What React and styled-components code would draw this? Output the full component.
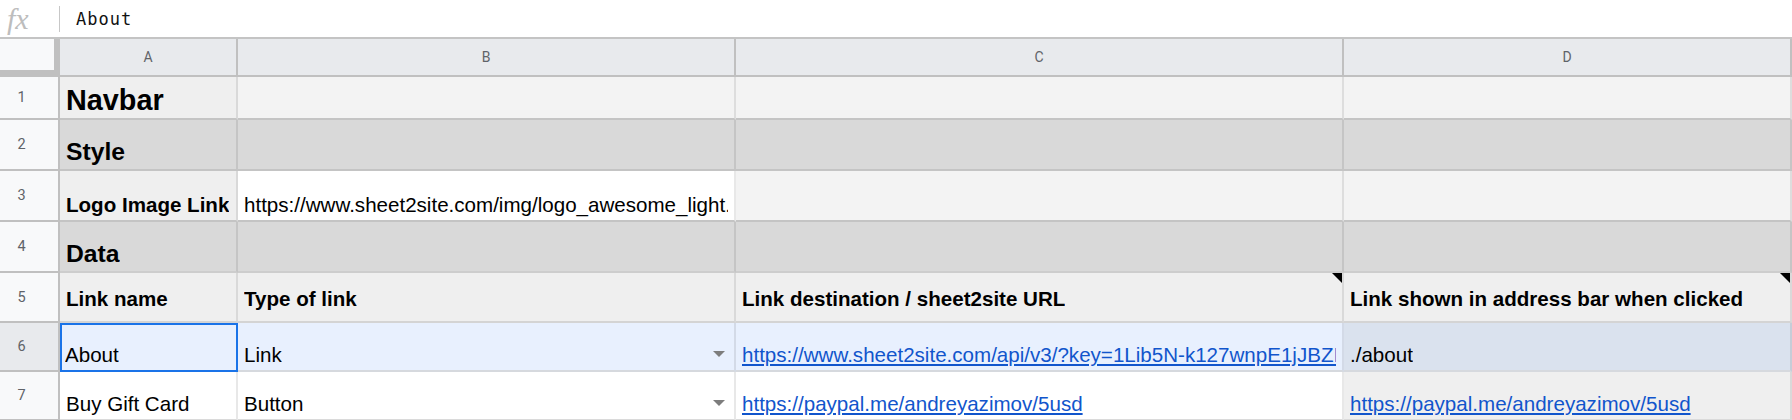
import React from "react";
import styled, { createGlobalStyle } from "styled-components";

const GlobalStyle = createGlobalStyle`
  html, body {
    margin: 0;
    padding: 0;
    background: #fff;
  }
  body {
    font-family: "Liberation Sans", Arial, sans-serif;
    overflow: hidden;
  }
`;

const COLS = "60px 178px 498px 608px 1fr";

const Sheet = styled.div`
  width: 1792px;
  height: 420px;
  overflow: hidden;
  display: flex;
  flex-direction: column;
`;

const FormulaBar = styled.div`
  height: 39px;
  flex-shrink: 0;
  box-sizing: border-box;
  border-bottom: 2px solid #c4c4c4;
  display: flex;
  align-items: center;
`;

const FxLabel = styled.div`
  width: 59px;
  box-sizing: border-box;
  padding-left: 7px;
  font-family: "Liberation Serif", serif;
  font-style: italic;
  font-size: 30px;
  color: #bdbdbd;
  line-height: 1.2;
`;

const Divider = styled.div`
  width: 1px;
  height: 26px;
  background: #c7c7c7;
`;

const FormulaText = styled.div`
  padding-left: 16px;
  font-family: "DejaVu Sans Mono", "Liberation Mono", monospace;
  font-size: 17px;
  letter-spacing: 1px;
  color: #111;
`;

const Row = styled.div`
  display: grid;
  grid-template-columns: ${COLS};
  height: ${(p) => p.h}px;
  flex-shrink: 0;
`;

const Corner = styled.div`
  box-sizing: border-box;
  background: #f8f9fa;
  border-right: 6px solid #c0c0c0;
  border-bottom: 7px solid #c0c0c0;
`;

const ColHead = styled.div`
  box-sizing: border-box;
  background: #e8eaed;
  border-right: 2px solid #c0c0c0;
  border-bottom: 2px solid #c0c0c0;
  display: flex;
  align-items: center;
  justify-content: center;
  font-family: Roboto, "Liberation Sans", sans-serif;
  font-size: 14px;
  color: #5f6368;
`;

const RowHead = styled.div`
  box-sizing: border-box;
  background: ${(p) => (p.active ? "#e8eaed" : "#f8f9fa")};
  border-right: 2px solid #c0c0c0;
  border-bottom: 2px solid #c0c0c0;
  display: flex;
  align-items: center;
  justify-content: center;
  padding-right: 15px;
  font-family: Roboto, "Liberation Sans", sans-serif;
  font-size: 14.5px;
  color: #5f6368;
`;

const Cell = styled.div`
  position: relative;
  box-sizing: border-box;
  min-width: 0;
  overflow: hidden;
  white-space: nowrap;
  background: ${(p) => p.bg || "#fff"};
  border-right: 2px solid rgba(0, 0, 0, 0.09);
  border-bottom: 2px solid ${(p) => p.line || "#c4c4c4"};
  display: flex;
  align-items: ${(p) => (p.middle ? "center" : "flex-end")};
  padding: ${(p) => (p.middle ? "4px 6px 0 6px" : "0 6px 2px 6px")};
  ${(p) =>
    p.selected &&
    `
    border-right-color: #1a73e8;
    border-bottom-color: #1a73e8;
    box-shadow: inset 2px 2px 0 #1a73e8;
    padding-left: 5px;
  `}
`;

const Text = styled.span`
  font-size: ${(p) => p.size || 20.57}px;
  font-weight: ${(p) => (p.bold ? 700 : 400)};
  line-height: 1.2;
  color: #000;
  overflow: hidden;
  margin-bottom: ${(p) => p.drop || 0}px;
`;

const Link = styled(Text)`
  color: #1155cc;
  text-decoration: underline;
  text-underline-offset: 2px;
`;

const Caret = styled.span`
  margin-left: auto;
  margin-right: 3px;
  margin-bottom: 11px;
  flex-shrink: 0;
  width: 0;
  height: 0;
  border-left: 6px solid transparent;
  border-right: 6px solid transparent;
  border-top: 6px solid #7d7d7d;
`;

const Note = styled.span`
  position: absolute;
  top: 0;
  right: 0;
  width: 0;
  height: 0;
  border-top: 10px solid #000;
  border-left: 10px solid transparent;
`;

const App = () => {
  return (
    <Sheet>
      <GlobalStyle />
      <FormulaBar>
        <FxLabel>fx</FxLabel>
        <Divider />
        <FormulaText>About</FormulaText>
      </FormulaBar>

      <Row h={38}>
        <Corner />
        {["A", "B", "C", "D"].map((c) => (
          <ColHead key={c}>{c}</ColHead>
        ))}
      </Row>

      <Row h={43}>
        <RowHead>1</RowHead>
        <Cell bg="#efefef">
          <Text bold size={28.8} drop={-2}>
            Navbar
          </Text>
        </Cell>
        <Cell bg="#f3f3f3" />
        <Cell bg="#f3f3f3" />
        <Cell bg="#f3f3f3" />
      </Row>

      <Row h={51}>
        <RowHead>2</RowHead>
        <Cell bg="#d9d9d9">
          <Text bold size={24.69}>
            Style
          </Text>
        </Cell>
        <Cell bg="#d9d9d9" />
        <Cell bg="#d9d9d9" />
        <Cell bg="#d9d9d9" />
      </Row>

      <Row h={51}>
        <RowHead>3</RowHead>
        <Cell bg="#efefef">
          <Text bold>Logo Image Link</Text>
        </Cell>
        <Cell bg="#fff">
          <Text>https://www.sheet2site.com/img/logo_awesome_light.png</Text>
        </Cell>
        <Cell bg="#f3f3f3" />
        <Cell bg="#f3f3f3" />
      </Row>

      <Row h={51}>
        <RowHead>4</RowHead>
        <Cell bg="#d9d9d9" line="#cdcdcd">
          <Text bold size={24.69}>
            Data
          </Text>
        </Cell>
        <Cell bg="#d9d9d9" line="#cdcdcd" />
        <Cell bg="#d9d9d9" line="#cdcdcd" />
        <Cell bg="#d9d9d9" line="#cdcdcd" />
      </Row>

      <Row h={50}>
        <RowHead>5</RowHead>
        <Cell bg="#efefef" line="#d4d4d4" middle>
          <Text bold>Link name</Text>
        </Cell>
        <Cell bg="#efefef" line="#d4d4d4" middle>
          <Text bold>Type of link</Text>
        </Cell>
        <Cell bg="#efefef" line="#d4d4d4" middle>
          <Text bold>Link destination / sheet2site URL</Text>
          <Note />
        </Cell>
        <Cell bg="#efefef" line="#d4d4d4" middle>
          <Text bold>Link shown in address bar when clicked</Text>
          <Note />
        </Cell>
      </Row>

      <Row h={49}>
        <RowHead active>6</RowHead>
        <Cell bg="#e8f0fe" line="#d6d9de" selected>
          <Text>About</Text>
        </Cell>
        <Cell bg="#e8f0fe" line="#d6d9de">
          <Text>Link</Text>
          <Caret />
        </Cell>
        <Cell bg="#e8f0fe" line="#d6d9de">
          <Link>https://www.sheet2site.com/api/v3/?key=1Lib5N-k127wnpE1jJBZI</Link>
        </Cell>
        <Cell bg="#dae2ee" line="#d6d9de">
          <Text>./about</Text>
        </Cell>
      </Row>

      <Row h={49}>
        <RowHead>7</RowHead>
        <Cell bg="#fff" line="#dadada">
          <Text>Buy Gift Card</Text>
        </Cell>
        <Cell bg="#fff" line="#dadada">
          <Text>Button</Text>
          <Caret />
        </Cell>
        <Cell bg="#fff" line="#dadada">
          <Link>https://paypal.me/andreyazimov/5usd</Link>
        </Cell>
        <Cell bg="#efefef" line="#dadada">
          <Link>https://paypal.me/andreyazimov/5usd</Link>
        </Cell>
      </Row>
    </Sheet>
  );
};

export default App;
